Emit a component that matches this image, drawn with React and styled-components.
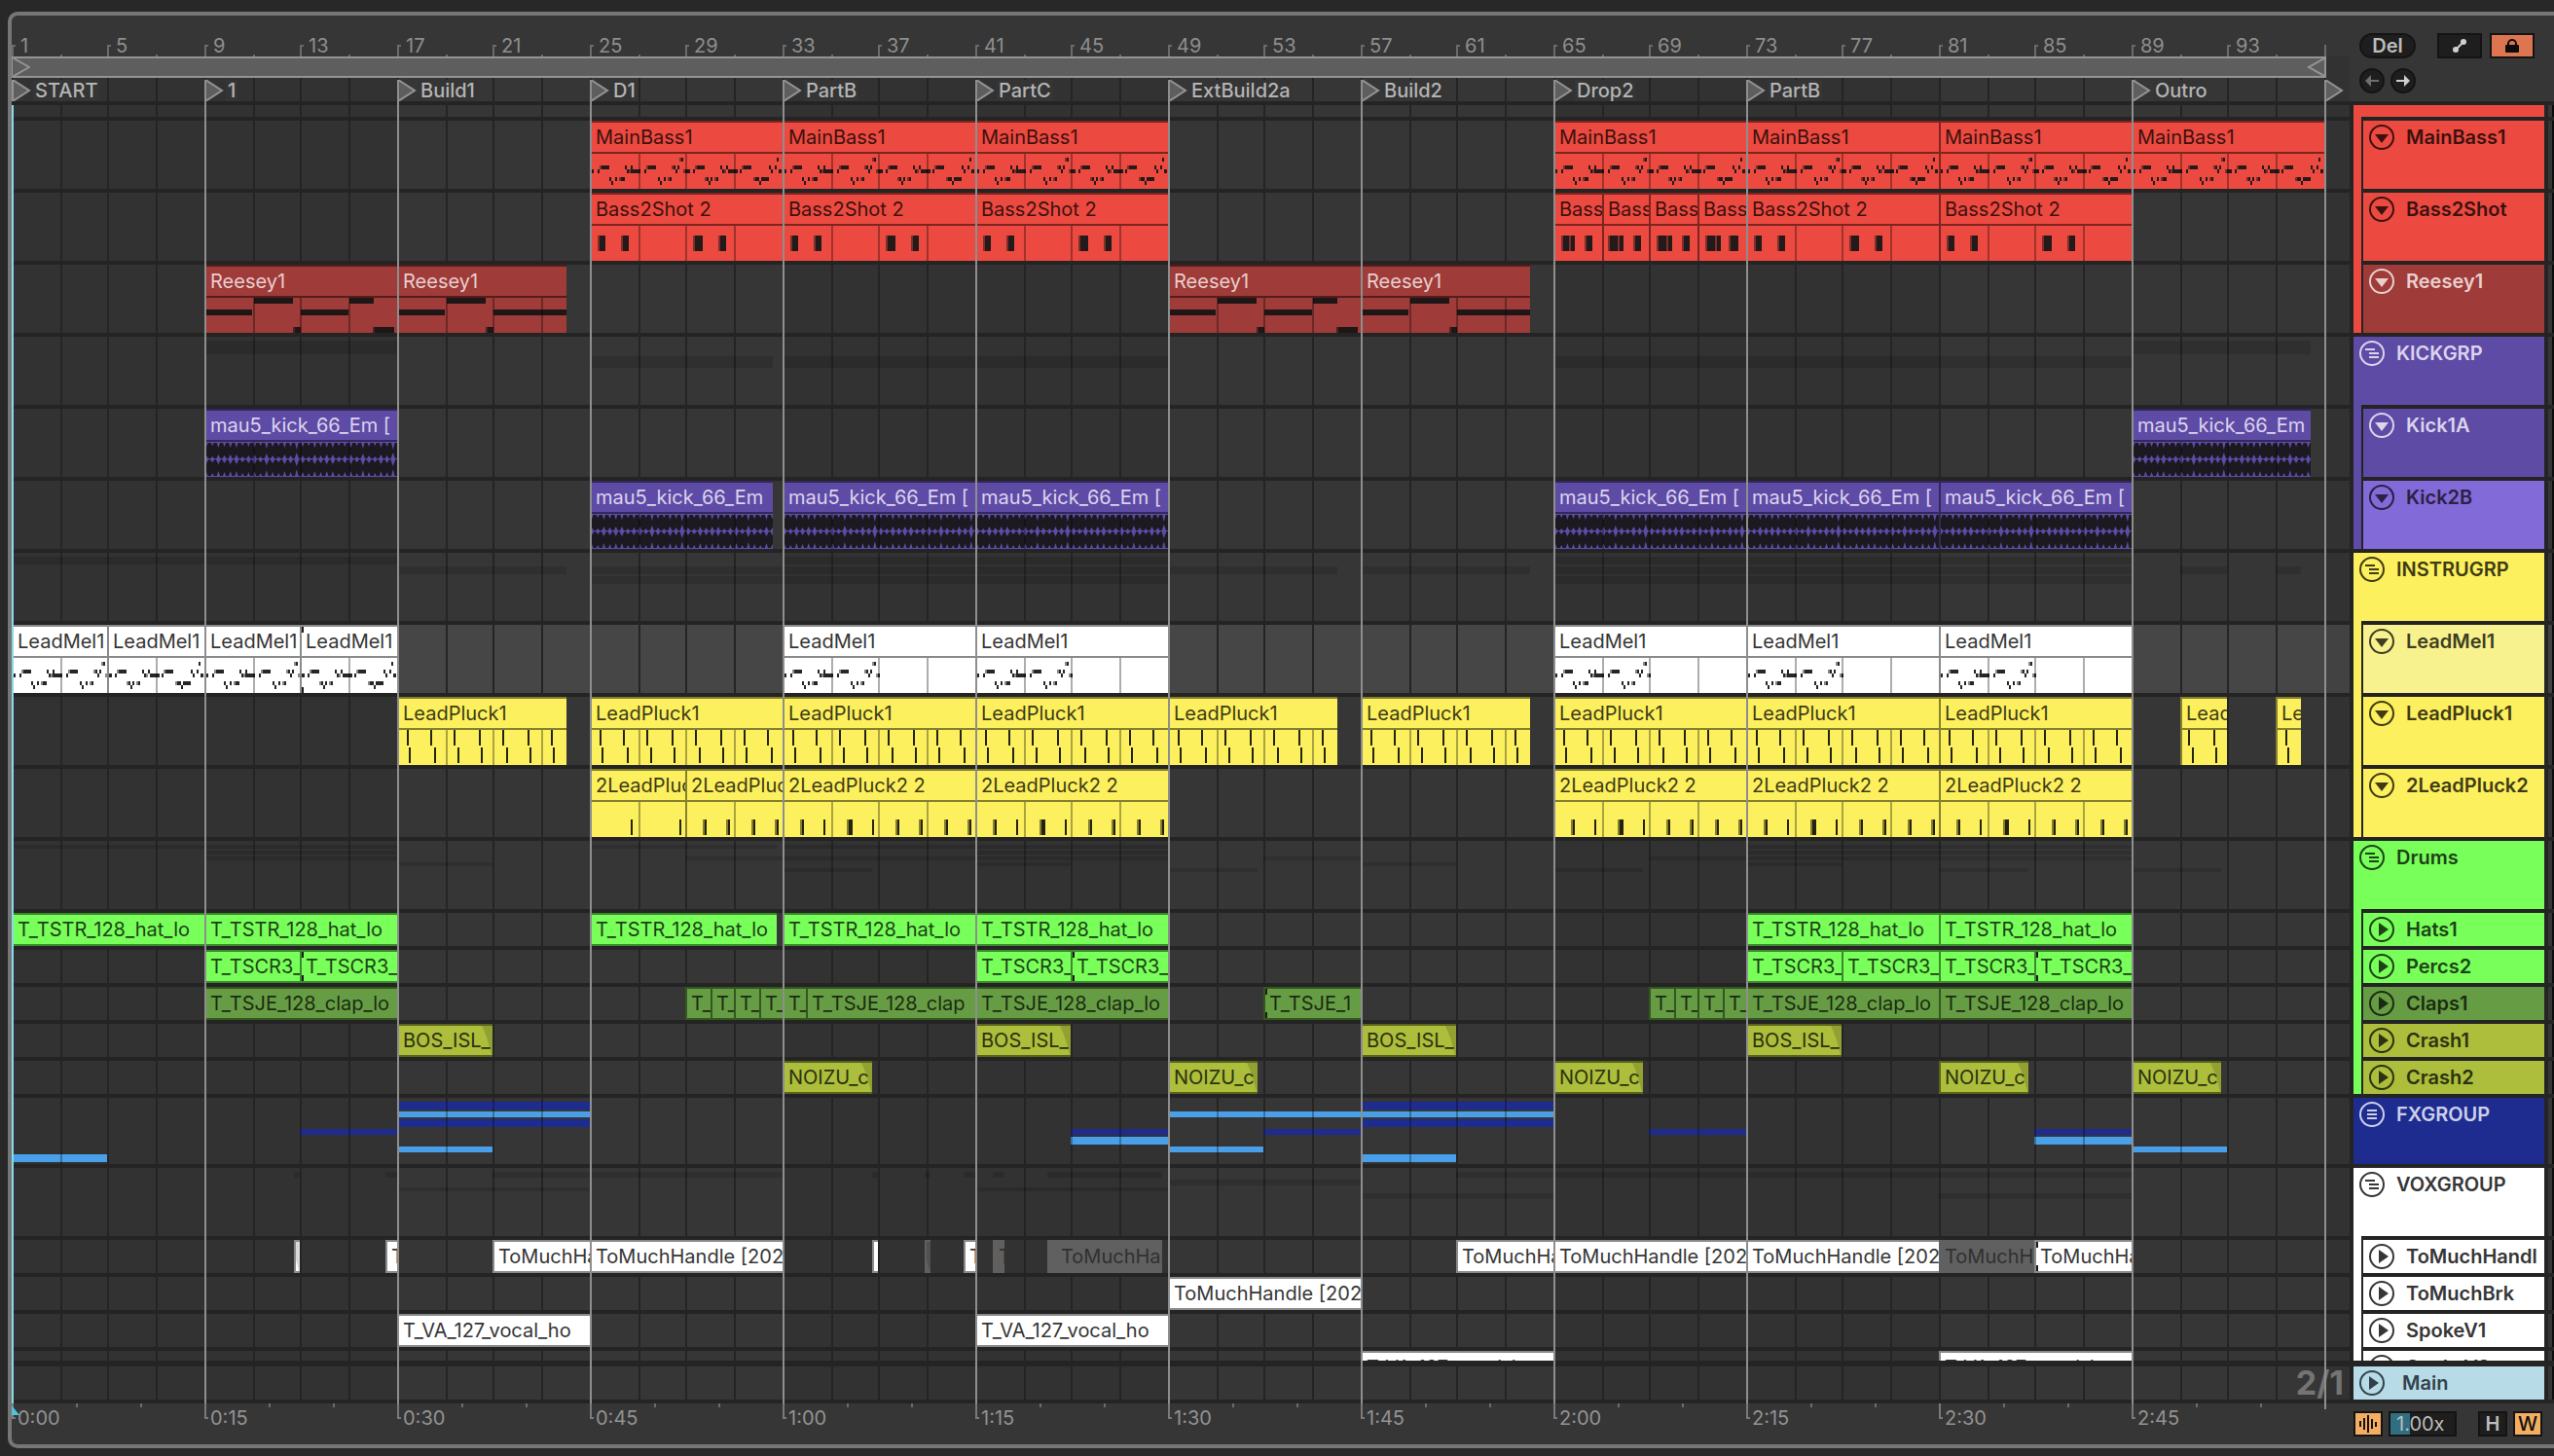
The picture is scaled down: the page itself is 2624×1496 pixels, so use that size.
import React, {useState} from 'react';
import styled, {createGlobalStyle, css} from 'styled-components';

const BAR = 24.75
const LOOP = 198

// bar lines always land on whole (even) pixels
const snap = bars => Math.round(bars * BAR / 2 - 0.01) * 2
const toX = bar => snap(bar - 1)

const GlobalStyle = createGlobalStyle`
  *, *::before, *::after { box-sizing: border-box; }
  body {
    margin: 0;
    background: #282828;
    font-family: Inter, "Liberation Sans", sans-serif;
    font-size: 20px;
    line-height: 26px;
    color: #b4b4b4;
  }
  button, input { font: inherit; color: inherit; padding: 0; margin: 0; }
`

const gridLines = color => css`
  linear-gradient(to right,
    ${color} 2px, transparent 2px, transparent 50px,
    ${color} 50px, ${color} 52px, transparent 52px, transparent 98px,
    ${color} 98px, ${color} 100px, transparent 100px, transparent 148px,
    ${color} 148px, ${color} 150px, transparent 150px)
`

const laneBackground = (dark, light) => css`
  background-image: ${gridLines('#242424')}, linear-gradient(to right, ${dark} 50%, ${light} 50%);
  background-size: 198px 100%, 792px 100%;
`

const Page = styled.main`
  display: flex;
  min-height: 100vh;
  height: 100vh;
  padding: 12px 0 8px 8px;
`
const Frame = styled.div`
  position: relative;
  flex: 1;
  min-width: 0;
  display: flex;
  flex-direction: column;
  border: 4px solid #767676;
  border-right: none;
  border-radius: 10px 0 0 10px;
  background: #363636;
  overflow: hidden;
`
const Split = styled.div`
  display: grid;
  grid-template-columns: minmax(0, 1fr) 196px 6px;
  column-gap: 4px;
  flex: none;
`
const TopBar = styled(Split)`
  height: 88px;
`
const Timeline = styled.div`
  overflow: hidden;
`
const Ruler = styled.div`
  display: flex;
  height: 42px;
  padding-top: 18px;
  color: #8e8e8e;
`
const RulerCell = styled.div`
  position: relative;
  flex: none;
  width: ${p => p.$odd ? 100 : 98}px;
  padding-left: 9px;
  line-height: 26px;
  &::before {
    content: '';
    position: absolute;
    left: 0;
    bottom: 0;
    width: 4px;
    height: 12px;
    border-left: 2px solid #6b6b6b;
    border-top: 2px solid #6b6b6b;
  }
  &::after {
    content: '';
    position: absolute;
    left: 50px;
    bottom: 0;
    width: 2px;
    height: 2px;
    background: #6b6b6b;
  }
`
const RulerEnd = styled.div`
  align-self: flex-end;
  width: 2px;
  height: 12px;
  background: #6b6b6b;
`
const LoopTrack = styled.div`
  height: 22px;
  background: #323232;
`
const LoopBrace = styled.div`
  display: flex;
  justify-content: space-between;
  width: 2378px;
  height: 22px;
  border: 2px solid #949494;
  border-left-width: 1px;
  background: #5e5e5e;
`
const Locators = styled.div`
  display: flex;
  height: 24px;
  padding-top: 2px;
  ${laneBackground('#323232', '#363636')}
`
const Locator = styled.div`
  display: flex;
  flex: none;
  align-items: center;
  width: ${p => p.$span * LOOP}px;
  line-height: 22px;
  font-weight: 500;
`
const LocatorName = styled.span`
  margin-left: 2px;
  padding: 0 2px;
  background: #353535;
`
const Controls = styled.div`
  display: grid;
  grid-template-columns: 26px 26px 1fr 46px 46px;
  grid-template-rows: 26px 26px;
  column-gap: 6px;
  row-gap: 10px;
  padding: 18px 10px 0 6px;
`
const DarkButton = styled.button`
  display: flex;
  align-items: center;
  justify-content: center;
  height: 26px;
  border: 2px solid #141414;
  background: ${p => p.$on || '#1e1e1e'};
  color: ${p => p.$on ? '#111111' : '#bdbdbd'};
  line-height: 22px;
`
const DelButton = styled(DarkButton)`
  grid-column: span 2;
  border-radius: 13px;
  font-weight: 600;
`
const RoundButton = styled(DarkButton)`
  border-radius: 50%;
  color: ${p => p.$dim ? '#6f6f6f' : '#cfcfcf'};
`
const ModeButton = styled(DarkButton)`
  grid-column: ${p => p.$col};
  margin: ${p => p.$col === 4 ? '0 2px 0 -2px' : '0'};
  width: 46px;
`

const Body = styled(Split)`
  flex: 1;
  min-height: 0;
  overflow: hidden;
  border-top: 4px solid #242424;
  border-bottom: 6px solid #242424;
  background: #242424;
`
const MainRow = styled(Split)`
  border-bottom: 4px solid #242424;
  background: #242424;
`
const Column = styled.div`
  display: flex;
  flex-direction: column;
  gap: 4px;
  min-height: 0;
  overflow: hidden;
  & > * { flex: none; }
`
const Lane = styled.div`
  position: relative;
  height: ${p => p.$h}px;
  overflow: hidden;
  ${p => p.$selected ? laneBackground('#424242', '#464646') : laneBackground('#323232', '#363636')}
`
const Stub = styled.div`
  height: ${p => p.$h}px;
  background: ${p => p.$selected ? '#424242' : '#363636'};
  border-right: 2px solid #0c0c0c;
`

const ClipBox = styled.div`
  position: absolute;
  top: 0;
  height: 100%;
  overflow: hidden;
  white-space: nowrap;
  background: ${p => p.$c.bg};
  color: ${p => p.$c.text};
  border-left: 2px solid ${p => p.$c.edge};
  border-top: 2px solid ${p => p.$c.edge};
  border-bottom: ${p => p.$small ? '2px' : '0'} solid ${p => p.$c.edge};
`
const ClipTitle = styled.div`
  height: 30px;
  padding-left: ${p => p.$indent ? 12 : 4}px;
  overflow: hidden;
  line-height: 30px;
`
const ClipContent = styled.div`
  position: relative;
  height: 38px;
  margin-left: -2px;
  border-top: 2px solid ${p => p.$edge};
  svg { display: block; }
  &::after {
    content: '';
    position: absolute;
    inset: 0;
    background-image: ${gridLines('rgba(0, 0, 0, 0.32)')};
    background-size: 198px 100%;
    background-position: ${p => -p.$offset}px 0;
  }
`
const Fade = styled.svg`
  position: absolute;
  right: 0;
  top: 0;
`
const FadeMark = styled.div`
  position: absolute;
  left: 0;
  top: 0;
  bottom: 0;
  width: 2px;
  background: linear-gradient(#1c1c1c 6px, transparent 6px, transparent calc(100% - 6px), #1c1c1c calc(100% - 6px));
`
const Band = styled.div`
  position: absolute;
  top: ${p => p.$top}px;
  height: ${p => p.$h}px;
  background: ${p => p.$color || 'rgba(0, 0, 0, 0.12)'};
  &::after {
    content: '';
    position: absolute;
    inset: 0;
    background-image: ${p => p.$color && gridLines('rgba(0, 0, 0, 0.3)')};
    background-size: 198px 100%;
    background-position: ${p => -p.$offset}px 0;
  }
`

const Header = styled.div`
  display: flex;
  align-items: flex-start;
  gap: 12px;
  height: ${p => p.$h}px;
  padding: ${p => p.$h > 12 ? 4 : 0}px 6px 0;
  overflow: hidden;
  white-space: nowrap;
  background: ${p => p.$bg};
  color: ${p => p.$color};
  font-weight: 600;
`
const MainHeader = styled(Header)`
  gap: 18px;
`
const FoldButton = styled.button`
  flex: none;
  width: 26px;
  height: 26px;
  border: none;
  background: none;
  svg { display: block; }
`
const Children = styled.div`
  display: flex;
  flex-direction: column;
  gap: 4px;
  margin-top: -4px;
  padding: 4px 0 0 2px;
  border-left: 8px solid ${p => p.$color};
  background: #242424;
`

const Lines = styled.div`
  position: absolute;
  top: 66px;
  left: 0;
  bottom: 42px;
  width: 2390px;
  pointer-events: none;
`
const Line = styled.div`
  position: absolute;
  top: 0;
  bottom: ${p => p.$last ? -6 : 0}px;
  width: 2px;
  background: #8e8e8e;
`
const Playhead = styled(Line)`
  top: 26px;
  background: #86dbe8;
`
const Position = styled.div`
  position: absolute;
  right: 6px;
  top: 0;
  line-height: 34px;
  font-size: 34px;
  font-weight: 700;
  color: #747474;
`

const BottomBar = styled(Split)`
  height: 42px;
`
const Times = styled.div`
  position: relative;
  display: flex;
  overflow: hidden;
  color: #929292;
`
const TimeCell = styled.div`
  position: relative;
  flex: none;
  width: 198px;
  padding: 2px 0 0 6px;
  background: linear-gradient(#6b6b6b, #6b6b6b) 66px 0 / 2px 4px no-repeat,
    linear-gradient(#6b6b6b, #6b6b6b) 132px 0 / 2px 4px no-repeat;
  &::before {
    content: '';
    position: absolute;
    left: 0;
    top: 0;
    width: 4px;
    height: 16px;
    border-left: 2px solid #7a7a7a;
    border-bottom: 2px solid #7a7a7a;
  }
`
const StartFlag = styled.svg`
  position: absolute;
  left: 0;
  top: 2px;
`
const BottomControls = styled.div`
  display: grid;
  grid-template-columns: 30px 70px 1fr 30px 30px;
  column-gap: 6px;
  padding: 8px 2px 0 0;
`
const SpeedInput = styled.input`
  width: 70px;
  height: 26px;
  padding-left: 6px;
  border: 2px solid #141414;
  background: linear-gradient(to right, #2f6f80 20px, #1e1e1e 20px);
  color: #bdbdbd;
`
const WideButton = styled(DarkButton)`
  grid-column: ${p => p.$col};
  font-weight: ${p => p.$on ? 500 : 600};
`

const RED = {bg: '#ec4a40', edge: '#7d2320', text: '#3c110f', note: '#231a19', half: '#7f2f2c'}
const BRICK = {bg: '#9f3b38', edge: '#551d1b', text: '#e8cfce', note: '#1f1717', half: '#4a2322'}
const PURPLE = {bg: '#5e4ba5', edge: '#32285a', text: '#dcd3ee', note: '#1c1a20', half: '#5e4ba5'}
const WHITE = {bg: '#ffffff', edge: '#8a8a8a', text: '#363636', note: '#262626', half: '#8a8a8a'}
const YELLOW = {bg: '#fcf05e', edge: '#85802e', text: '#3f3b14', note: '#24230f', half: '#85802e'}
const GREEN = {bg: '#78ff5a', edge: '#3b8a2c', text: '#1e4217'}
const CLAP = {bg: '#669d44', edge: '#345720', text: '#1b2b12'}
const CRASH = {bg: '#acbe3b', edge: '#5a641c', text: '#2c3110'}
const MUTED = {bg: '#606060', edge: '#606060', text: '#303030'}

// [x, y, width, height, half tone]
const MELODY = [
    [0, 16, 4], [8, 16, 2], [10, 12, 2, 4, 1], [12, 12, 8], [20, 24, 2], [22, 28, 2], [26, 24, 2],
    [30, 24, 2, 4, 1], [32, 24, 4], [36, 12, 2], [38, 16, 2], [42, 12, 2], [40, 16, 2, 4, 1], [42, 16, 10],
    [56, 16, 2], [58, 12, 2, 4, 1], [60, 12, 8], [70, 24, 2], [72, 28, 2], [76, 24, 2], [80, 24, 2, 4, 1], [82, 24, 2],
    [84, 12, 2, 4, 1], [86, 12, 2], [88, 16, 2], [90, 12, 2], [92, 4, 2, 4, 1], [94, 4, 2], [96, 16, 2, 4, 1],
    [98, 16, 5], [106, 16, 2], [108, 12, 2, 4, 1], [110, 12, 8], [118, 24, 2, 4, 1], [120, 24, 2], [122, 28, 2],
    [124, 24, 2], [128, 24, 2, 4, 1], [130, 24, 2], [134, 12, 2], [136, 16, 2], [140, 12, 2], [138, 16, 2, 4, 1], [142, 16, 10],
    [154, 16, 2], [156, 12, 2, 4, 1], [158, 12, 8], [168, 24, 2, 4, 1], [170, 24, 4], [174, 28, 2], [176, 24, 8],
    [184, 12, 2], [186, 16, 2], [190, 12, 2], [192, 4, 2], [194, 16, 3],
].map(([x, y, w, h = 4, half]) => [x, y, w, h, half])
const MELODY_HALF = MELODY.filter(n => n[0] < 98).concat([[98, 16, 2, 4]])

const SHOT = [
    [8, 10, 2, 16, 1], [10, 10, 6, 16], [32, 10, 2, 16, 1], [34, 10, 6, 16],
    [106, 10, 2, 16, 1], [108, 10, 8, 16], [132, 10, 2, 16, 1], [134, 10, 6, 16],
]
const SHOT_DENSE = [
    [8, 10, 2, 16, 1], [10, 10, 6, 16], [16, 10, 2, 16, 1], [18, 10, 4, 16], [32, 10, 2, 16, 1], [34, 10, 6, 16],
    [56, 10, 2, 16, 1], [58, 10, 8, 16], [66, 10, 2, 16, 1], [68, 10, 4, 16], [82, 10, 2, 16, 1], [84, 10, 6, 16],
    [106, 10, 2, 16, 1], [108, 10, 8, 16], [116, 10, 2, 16, 1], [118, 10, 4, 16], [132, 10, 2, 16, 1], [134, 10, 6, 16],
    [156, 10, 2, 16, 1], [158, 10, 8, 16], [166, 10, 2, 16, 1], [168, 10, 4, 16], [180, 10, 2, 16, 1], [182, 10, 8, 16],
]
const REESE_A = [
    [0, 12, 49, 6], [51, 0, 40, 6], [91, 30, 2, 6, 1], [93, 30, 6, 6], [99, 12, 49, 6],
    [149, 0, 25, 6], [173, 30, 2, 6, 1], [175, 30, 20, 6],
]
const REESE_B = [[0, 12, 49, 6], [51, 0, 40, 6], [91, 30, 2, 6, 1], [93, 30, 6, 6], [99, 12, 76, 6]]
const PLUCK = [
    ...[10, 34, 58, 84, 108, 134, 158, 182].map(x => [x, 0, 2, 16]),
    ...[12, 38, 62, 86, 112, 136, 160, 186].map(x => [x, 18, 2, 16]),
]
const PLUCK2_TAIL = [
    [42, 18, 2, 16], [92, 18, 2, 16], [116, 18, 2, 16, 1], [118, 18, 2, 16], [140, 18, 2, 16, 1], [142, 18, 2, 16],
    [166, 18, 2, 16, 1], [168, 18, 2, 16], [190, 18, 2, 16, 1], [192, 18, 2, 16],
]
const PLUCK2 = [[18, 18, 2, 16, 1], [20, 18, 2, 16], [66, 18, 2, 16, 1], [68, 18, 4, 16], ...PLUCK2_TAIL]

const clips = (name, ranges, extra) => ranges.map(([from, to, more]) => ({name, from, to, ...extra, ...more}))

const KICK = 'mau5_kick_66_Em ['
const HAT = 'T_TSTR_128_hat_lo'
const PERC = 'T_TSCR3_'
const CLAP_NAME = 'T_TSJE_128_clap_lo'
const HANDLE = 'ToMuchHandle [202'
const HANDLE_SHORT = 'ToMuchHa'
const VOCAL = 'T_VA_127_vocal_ho'
const mark = {mark: true}
const muted = {c: MUTED}

const groups = [
    {
        name: '', h: 12, color: '#ec4a40', text: '#3c110f', bands: [],
        tracks: [
            {name: 'MainBass1', h: 70, c: RED, clips: clips('MainBass1', [[25, 33], [33, 41], [41, 49], [65, 73], [73, 81], [81, 89], [89, 97]], {notes: MELODY})},
            {
                name: 'Bass2Shot', h: 70, c: RED, clips: [
                    ...clips('Bass2Shot 2', [[25, 33], [33, 41], [41, 49], [73, 81], [81, 89]], {notes: SHOT}),
                    ...clips('Bass', [[65, 67], [67, 69], [69, 71], [71, 73]], {notes: SHOT_DENSE}),
                ],
            },
            {
                name: 'Reesey1', h: 70, c: BRICK, clips: [
                    ...clips('Reesey1', [[9, 17], [49, 57]], {notes: REESE_A}),
                    ...clips('Reesey1', [[17, 24], [57, 64]], {notes: REESE_B}),
                ],
            },
        ],
    },
    {
        name: 'KICKGRP', h: 70, color: '#5e4ba5', text: '#dcd3ee', bands: [[4, 14], [20, 12]],
        tracks: [
            {name: 'Kick1A', h: 70, c: PURPLE, clips: clips(KICK, [[9, 17], [89, 96.42, {name: 'mau5_kick_66_Em'}]], {wave: true})},
            {
                name: 'Kick2B', h: 70, c: PURPLE, bg: '#826ad8', text: '#2a2145',
                clips: clips(KICK, [[25, 32.6, {name: 'mau5_kick_66_Em'}], [33, 41], [41, 49], [65, 73], [73, 81], [81, 89]], {wave: true}),
            },
        ],
    },
    {
        name: 'INSTRUGRP', h: 70, color: '#fcf05e', text: '#3f3b14', bands: [[4, 8], [14, 8], [24, 8]],
        tracks: [
            {
                name: 'LeadMel1', h: 70, c: WHITE, bg: '#f7f28d', text: '#3f3d22', selected: true, clips: [
                    ...clips('LeadMel1', [[1, 5], [5, 9], [9, 13], [13, 17, mark]], {notes: MELODY}),
                    ...clips('LeadMel1', [[33, 41], [41, 49], [65, 73], [73, 81], [81, 89]], {notes: MELODY_HALF}),
                ],
            },
            {
                name: 'LeadPluck1', h: 70, c: YELLOW, clips: [
                    ...clips('LeadPluck1', [[17, 24], [25, 33], [33, 41], [41, 49], [49, 56], [57, 64], [65, 73], [73, 81], [81, 89]], {notes: PLUCK}),
                    ...clips('Lead', [[91, 93], [95, 96, {name: 'Le'}]], {notes: PLUCK}),
                ],
            },
            {
                name: '2LeadPluck2', h: 70, c: YELLOW, clips: [
                    ...clips('2LeadPluc', [[25, 29], [29, 33]], {notes: PLUCK2_TAIL}),
                    ...clips('2LeadPluck2 2', [[33, 41], [41, 49], [65, 73], [73, 81], [81, 89]], {notes: PLUCK2}),
                ],
            },
        ],
    },
    {
        name: 'Drums', h: 70, color: '#78ff5a', text: '#1e4217', bands: [[4, 4], [10, 4], [16, 4], [22, 4], [28, 4]],
        tracks: [
            {name: 'Hats1', h: 34, c: GREEN, clips: clips(HAT, [[1, 9], [9, 17], [25, 32.76], [33, 41], [41, 49], [73, 81], [81, 89]])},
            {name: 'Percs2', h: 34, c: GREEN, clips: clips(PERC, [[9, 13], [13, 17, mark], [41, 45], [45, 49, mark], [73, 77], [77, 81], [81, 85], [85, 89, mark]])},
            {
                name: 'Claps1', h: 34, c: CLAP, clips: [
                    ...clips(CLAP_NAME, [[9, 17], [41, 49], [73, 81], [81, 89]]),
                    ...clips('T_', [[29, 30], [30, 31], [31, 32], [32, 33], [33, 34], [69, 70], [70, 71], [71, 72], [72, 73]]),
                    ...clips('T_TSJE_128_clap', [[34, 41]]),
                    ...clips('T_TSJE_1', [[53, 57, mark]]),
                ],
            },
            {name: 'Crash1', h: 34, c: CRASH, clips: clips('BOS_ISL_', [[17, 21], [41, 45], [57, 61], [73, 77]], {fade: true})},
            {name: 'Crash2', h: 34, c: CRASH, clips: clips('NOIZU_c', [[33, 36.72], [49, 52.72], [65, 68.72], [81, 84.72], [89, 92.72]], {fade: true})},
        ],
    },
    {
        name: 'FXGROUP', h: 68, color: '#1f2c8f', text: '#ccd0ea', closed: true, bands: [], tracks: [],
        fx: [
            [17, 25, 4, 8, 0], [57, 65, 4, 8, 0], [17, 25, 14, 6, 1], [49, 65, 14, 6, 1], [17, 25, 22, 8, 0], [57, 65, 22, 8, 0],
            [13, 17, 32, 6, 0], [45, 49, 32, 6, 0], [53, 57, 32, 6, 0], [69, 73, 32, 6, 0], [85, 89, 32, 6, 0],
            [45, 49, 40, 8, 1], [85, 89, 40, 8, 1], [17, 21, 50, 6, 1], [49, 53, 50, 6, 1], [89, 93, 50, 6, 1],
            [1, 5, 58, 8, 1], [57, 61, 58, 8, 1],
        ],
    },
    {
        name: 'VOXGROUP', h: 70, color: '#ffffff', text: '#363636', bands: [[4, 6], [12, 6], [20, 4], [26, 6]],
        tracks: [
            {
                name: 'ToMuchHandl', h: 34, c: WHITE, clips: [
                    ...clips('', [[12.72, 13, {fade: true}], [36.72, 37]]),
                    ...clips('', [[38.9, 39.14, {fade: true}]], muted),
                    ...clips('T', [[16.5, 17], [40.5, 41]]),
                    ...clips('T', [[41.73, 42.2]], muted),
                    ...clips(HANDLE, [[25, 33], [65, 73], [73, 81]]),
                    ...clips(HANDLE_SHORT, [[21, 25], [61, 65], [85, 89, mark]]),
                    ...clips('ToMuchHan', [[44, 48.76, {indent: true}]], muted),
                    ...clips('ToMuchH', [[81, 85]], muted),
                ],
            },
            {name: 'ToMuchBrk', h: 34, c: WHITE, clips: clips(HANDLE, [[49, 57]])},
            {name: 'SpokeV1', h: 34, c: WHITE, clips: clips(VOCAL, [[17, 25], [41, 49]])},
            {name: 'SpokeV2', h: 34, c: WHITE, clips: clips(VOCAL, [[57, 65], [81, 89]])},
        ],
    },
]

const locators = [
    ['START', 1], ['1', 1], ['Build1', 1], ['D1', 1], ['PartB', 1], ['PartC', 1], ['ExtBuild2a', 1],
    ['Build2', 1], ['Drop2', 1], ['PartB', 2], ['Outro', 1],
]
const lineBars = [9, 17, 25, 33, 41, 49, 57, 65, 73, 89, 97]
const times = ['0:00', '0:15', '0:30', '0:45', '1:00', '1:15', '1:30', '1:45', '2:00', '2:15', '2:30', '2:45']

const Flag = () => (
    <svg width="20" height="22" viewBox="0 0 20 22">
        <path d="M1 0 L18 11 L1 22 Z" fill="#5e5e5e" stroke="#949494" strokeWidth="2"/>
    </svg>
)

const Notes = ({notes, c, offset, width}) => (
    <svg width={width} height="36" viewBox={`${offset} 0 ${width} 36`} shapeRendering="crispEdges">
        {notes.map(([x, y, w, h, half], i) => (
            <rect key={i} x={x} y={y} width={w} height={h} fill={half ? c.half : c.note}/>
        ))}
    </svg>
)

const HITS = [4, 3, 5, 4, 5, 5, 3, 4, 5, 3, 6, 4, 3, 5, 4, 7]
const Wave = ({width, c}) => {
    const step = LOOP / 32
    let teeth = ''
    for (let i = 0; i * step < width; i++) {
        const x = i * step + 2
        const a = HITS[i % HITS.length]
        teeth += `M${x - 2} 0 L${x + 2} 0 L${x} ${a + 1} Z `
        teeth += `M${x - 2.5} 18 L${x} ${18 - a} L${x + 2.5} 18 L${x} ${18 + a} Z `
        teeth += `M${x - 2} 36 L${x + 2} 36 L${x} ${35 - a} Z `
    }
    return (
        <svg width={width} height="36">
            <rect width={width} height="36" fill={c.note}/>
            <rect width={width} height="1" fill={c.bg}/>
            <rect y="17" width={width} height="1" fill={c.bg}/>
            <rect y="35" width={width} height="1" fill={c.bg}/>
            <path d={teeth} fill={c.bg}/>
        </svg>
    )
}

const Clip = ({clip, track}) => {
    const c = clip.c || track.c
    const small = track.h < 40
    const left = toX(clip.from)
    const width = toX(clip.to) - left
    const offset = left % LOOP
    return (
        <ClipBox $c={c} $small={small} style={{left, width}}>
            {clip.name && <ClipTitle $indent={clip.indent}>{clip.name}</ClipTitle>}
            {!small &&
                <ClipContent $edge={c.edge} $offset={offset}>
                    {clip.wave ? <Wave width={width} c={c}/> : <Notes notes={clip.notes} c={c} offset={offset} width={width}/>}
                </ClipContent>
            }
            {clip.fade && <Fade width="11" height="30"><path d="M0 0 H11 V30 H10 Q6 12 0 0 Z" fill="rgba(0, 0, 0, 0.15)"/></Fade>}
            {clip.mark && <FadeMark/>}
        </ClipBox>
    )
}

const GroupLane = ({group}) => (
    <Lane $h={group.h}>
        {group.tracks.map((track, i) => group.bands[i] && track.clips.map((clip, k) => (
            <Band
                key={track.name + k}
                $top={group.bands[i][0]}
                $h={group.bands[i][1]}
                style={{left: toX(clip.from), width: toX(clip.to) - toX(clip.from)}}
            />
        )))}
        {(group.fx || []).map(([from, to, top, h, light], i) => (
            <Band
                key={i}
                $top={top}
                $h={h}
                $color={light ? '#4aa0e8' : '#1f2c8f'}
                $offset={toX(from) % LOOP}
                style={{left: toX(from), width: toX(to) - toX(from)}}
            />
        ))}
    </Lane>
)

const FoldIcon = ({kind}) => (
    <svg width="26" height="26" viewBox="0 0 26 26" fill="none" stroke="currentColor" strokeWidth="2">
        <circle cx="13" cy="13" r="12"/>
        {kind === 'open' && <path d="M6 10 H20 L13 19 Z" fill="currentColor" stroke="none"/>}
        {kind === 'closed' && <path d="M10 6 V20 L20 13 Z" fill="currentColor" stroke="none"/>}
        {kind === 'group' && <path d="M6 9 H16 M10 13 H20 M10 17 H20"/>}
        {kind === 'list' && <path d="M8 9 H18 M8 13 H18 M8 17 H18"/>}
    </svg>
)

const TrackHeader = ({name, kind, h, bg, color}) => (
    <Header $h={h} $bg={bg} $color={color}>
        <FoldButton aria-label={`Fold ${name}`}><FoldIcon kind={kind}/></FoldButton>
        <span>{name}</span>
    </Header>
)

const App = () => {
    const [speed, setSpeed] = useState('1.00x')

    return (
        <Page>
            <GlobalStyle/>
            <Frame>
                <TopBar>
                    <Timeline>
                        <Ruler>
                            {Array.from({length: 24}, (_, i) => (
                                <RulerCell key={i} $odd={i % 2}>{i * 4 + 1}</RulerCell>
                            ))}
                            <RulerEnd/>
                        </Ruler>
                        <LoopTrack>
                            <LoopBrace>
                                <svg width="18" height="18"><path d="M1 0 L17 9 L1 18" fill="none" stroke="#949494" strokeWidth="2"/></svg>
                                <svg width="18" height="18"><path d="M18 0 L2 9 L18 18" fill="none" stroke="#949494" strokeWidth="2"/></svg>
                            </LoopBrace>
                        </LoopTrack>
                        <Locators>
                            {locators.map(([name, span], i) => (
                                <Locator key={i} $span={span}>
                                    <Flag/>
                                    <LocatorName>{name}</LocatorName>
                                </Locator>
                            ))}
                            <Flag/>
                        </Locators>
                    </Timeline>
                    <Controls>
                        <DelButton>Del</DelButton>
                        <ModeButton $col={4} aria-label="Automation">
                            <svg width="16" height="16" viewBox="0 0 16 16">
                                <path d="M4 12 L12 4" stroke="#cfcfcf" strokeWidth="2"/>
                                <circle cx="4" cy="12" r="3" fill="#cfcfcf"/>
                                <circle cx="12" cy="4" r="3" fill="#cfcfcf"/>
                            </svg>
                        </ModeButton>
                        <ModeButton $col={5} $on="#dd7550" aria-label="Lock envelopes">
                            <svg width="16" height="16" viewBox="0 0 16 16">
                                <path d="M4 8 V6 A4 4 0 0 1 12 6 V8" fill="none" stroke="#0c0c0c" strokeWidth="2"/>
                                <rect x="1" y="7" width="14" height="8" rx="1" fill="#0c0c0c"/>
                            </svg>
                        </ModeButton>
                        <RoundButton $dim aria-label="Previous locator">
                            <svg width="16" height="14" viewBox="0 0 16 14"><path d="M1 7 L7 1 V6 H15 V8 H7 V13 Z" fill="currentColor"/></svg>
                        </RoundButton>
                        <RoundButton aria-label="Next locator">
                            <svg width="16" height="14" viewBox="0 0 16 14"><path d="M15 7 L9 1 V6 H1 V8 H9 V13 Z" fill="currentColor"/></svg>
                        </RoundButton>
                    </Controls>
                </TopBar>

                <Body>
                    <Column>
                        {groups.map((group, g) => (
                            <React.Fragment key={g}>
                                <GroupLane group={group}/>
                                {group.tracks.map(track => (
                                    <Lane key={track.name} $h={track.h} $selected={track.selected}>
                                        {track.clips.map((clip, i) => <Clip key={i} clip={clip} track={track}/>)}
                                    </Lane>
                                ))}
                            </React.Fragment>
                        ))}
                    </Column>
                    <Column>
                        {groups.map((group, g) => (
                            <React.Fragment key={g}>
                                {group.name
                                    ? <TrackHeader name={group.name} kind={group.closed ? 'list' : 'group'} h={group.h} bg={group.color} color={group.text}/>
                                    : <Header $h={group.h} $bg={group.color}/>
                                }
                                {group.tracks.length > 0 &&
                                    <Children $color={group.color}>
                                        {group.tracks.map(track => (
                                            <TrackHeader
                                                key={track.name}
                                                name={track.name}
                                                kind={track.h < 40 ? 'closed' : 'open'}
                                                h={track.h}
                                                bg={track.bg || track.c.bg}
                                                color={track.text || track.c.text}
                                            />
                                        ))}
                                    </Children>
                                }
                            </React.Fragment>
                        ))}
                    </Column>
                    <Column>
                        {groups.map((group, g) => (
                            <React.Fragment key={g}>
                                <Stub $h={group.h}/>
                                {group.tracks.map(track => <Stub key={track.name} $h={track.h} $selected={track.selected}/>)}
                            </React.Fragment>
                        ))}
                    </Column>
                </Body>

                <MainRow>
                    <Lane $h={34}>
                        <Position>2/1</Position>
                    </Lane>
                    <MainHeader $h={34} $bg="#b7dce8" $color="#33424a">
                        <FoldButton aria-label="Fold Main"><FoldIcon kind="closed"/></FoldButton>
                        <span>Main</span>
                    </MainHeader>
                    <Stub $h={34}/>
                </MainRow>

                <BottomBar>
                    <Times>
                        {times.map(time => <TimeCell key={time}>{time}</TimeCell>)}
                        <StartFlag width="8" height="10"><path d="M0 0 L8 10 H0 Z" fill="#4fc3dc"/></StartFlag>
                    </Times>
                    <BottomControls>
                        <WideButton $col={1} $on="#f5ae61" aria-label="Waveform">
                            <svg width="18" height="18" viewBox="0 0 18 18" stroke="#141414" strokeWidth="2">
                                <path d="M1 6 V12 M5 3 V15 M9 0 V18 M13 4 V14 M17 7 V12"/>
                            </svg>
                        </WideButton>
                        <SpeedInput aria-label="Speed" value={speed} onChange={e => setSpeed(e.target.value)}/>
                        <WideButton $col={4}>H</WideButton>
                        <WideButton $col={5} $on="#f5ae61">W</WideButton>
                    </BottomControls>
                </BottomBar>

                <Lines>
                    <Playhead style={{left: 0}}/>
                    {lineBars.map(bar => <Line key={bar} $last={bar === 97} style={{left: toX(bar)}}/>)}
                </Lines>
            </Frame>
        </Page>
    )
}

export default App;
